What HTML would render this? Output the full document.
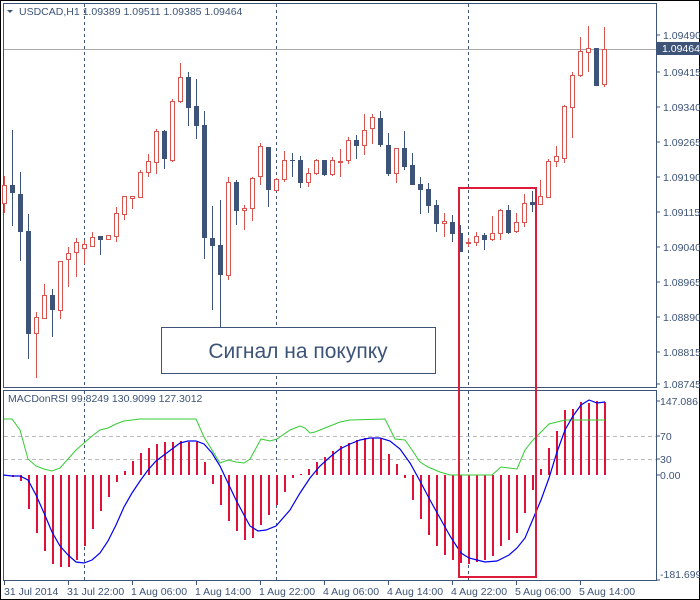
<!DOCTYPE html>
<html><head><meta charset="utf-8"><style>
html,body{margin:0;padding:0;background:#fff;}
body{width:700px;height:600px;overflow:hidden;position:relative;font-family:"Liberation Sans",sans-serif;}
svg{position:absolute;left:0;top:0;}
svg text{font-family:"Liberation Sans",sans-serif;fill:#3d5478;}
</style></head><body>
<svg id="s" width="700" height="600" viewBox="0 0 700 600" xmlns="http://www.w3.org/2000/svg">
<rect x="0.5" y="0.5" width="699" height="599" fill="#fff" stroke="#000"/>
<!-- main frame -->
<rect x="3.5" y="3.5" width="653" height="384" fill="none" stroke="#3d5478"/>
<rect x="3.5" y="390.5" width="653" height="190" fill="none" stroke="#3d5478"/>
<!-- vertical dashed -->
<g stroke="#3d5478" stroke-dasharray="3,3" stroke-width="1">
<line x1="84.5" y1="4" x2="84.5" y2="387"/><line x1="276.5" y1="4" x2="276.5" y2="387"/><line x1="468.5" y1="4" x2="468.5" y2="387"/>
<line x1="84.5" y1="391" x2="84.5" y2="580"/><line x1="276.5" y1="391" x2="276.5" y2="580"/><line x1="468.5" y1="391" x2="468.5" y2="580"/>
</g>
<!-- price line -->
<line x1="4" y1="49.5" x2="656" y2="49.5" stroke="#aaa"/>
<g id="candles"></g>
<!-- header -->
<path d="M7 10 L13 10 L10 13 Z" fill="#3d5478"/>
<text x="19" y="15" font-size="10.5">USDCAD,H1  1.09389 1.09511 1.09385 1.09464</text>
<!-- annotation -->
<rect x="161.5" y="327.5" width="274" height="46" fill="#fff" stroke="#3d5478"/>
<text x="298" y="358" font-size="21" text-anchor="middle">Сигнал на покупку</text>
<!-- right axis -->
<g font-size="10.5">
<g stroke="#3d5478"><line x1="656" y1="35" x2="660" y2="35"/><line x1="656" y1="72" x2="660" y2="72"/><line x1="656" y1="107" x2="660" y2="107"/><line x1="656" y1="142" x2="660" y2="142"/><line x1="656" y1="177" x2="660" y2="177"/><line x1="656" y1="212" x2="660" y2="212"/><line x1="656" y1="247" x2="660" y2="247"/><line x1="656" y1="282" x2="660" y2="282"/><line x1="656" y1="317" x2="660" y2="317"/><line x1="656" y1="352" x2="660" y2="352"/><line x1="656" y1="384" x2="660" y2="384"/>
<line x1="656" y1="401" x2="660" y2="401"/><line x1="656" y1="436" x2="660" y2="436"/><line x1="656" y1="459" x2="660" y2="459"/><line x1="656" y1="475" x2="660" y2="475"/><line x1="656" y1="580" x2="660" y2="580"/></g>
<text x="663" y="39">1.09490</text>
<rect x="657" y="42" width="43" height="13" fill="#3d5478"/>
<text x="662" y="52" style="fill:#fff">1.09464</text>
<text x="663" y="76">1.09415</text>
<text x="663" y="111">1.09340</text>
<text x="663" y="146">1.09265</text>
<text x="663" y="181">1.09190</text>
<text x="663" y="216">1.09115</text>
<text x="663" y="251">1.09040</text>
<text x="663" y="286">1.08965</text>
<text x="663" y="321">1.08890</text>
<text x="663" y="356">1.08815</text>
<text x="663" y="388">1.08745</text>
<text x="660" y="405">147.086</text>
<text x="660" y="440">70</text>
<text x="660" y="463">30</text>
<text x="660" y="479">0.00</text>
<text x="660" y="578">-181.6993</text>
</g>
<!-- indicator -->
<text x="8" y="402" font-size="10.5">MACDonRSI 99.8249 130.9099 127.3012</text>
<g stroke="#bbb" stroke-dasharray="4,3"><line x1="4" y1="436.5" x2="656" y2="436.5"/><line x1="4" y1="459.5" x2="656" y2="459.5"/></g>
<g id="bars" stroke="#e0103a" stroke-width="2"></g>
<polyline fill="none" stroke="#33cc33" stroke-width="1" points="4,419 12,419 20,430 28,459 36,466 44,469 52,471 60,468 68,459 76,450 84,443 92,436 100,430 108,428 116,424 124,421 132,420 140,419 196,419 204,437 212,450 220,463 228,460 236,462 244,463 250,459 261,439 270,441 277,439 290,430 300,426 305,428 310,433 315,432 330,426 340,422 350,420 385,419 389,427 395,439 405,440 412,450 420,462 428,467 440,472 450,475 492,475 501,467 509,468 517,469 525,450 533,440 541,432 549,424 557,422 565,420 605,420"/>
<polyline fill="none" stroke="#0000ee" stroke-width="1.2" points="3,475 12,476 20,476 28,480 36,495 44,513 52,532 60,546 68,555 76,562 84,563 92,560 100,553 108,541 116,525 124,507 132,493 140,481 148,470 156,461 164,455 172,449 180,443 188,441 196,441 204,444 212,453 220,466 228,483 236,500 244,515 250,526 258,531 266,530 276,526 290,510 300,493 310,478 320,466 330,457 340,449 350,444 360,440 370,438 380,438 390,441 400,449 410,463 420,481 430,500 440,518 450,536 461,553 469,558 477,560 485,562 497,561 509,555 517,548 525,538 533,519 541,500 549,478 557,452 565,430 573,416 581,405 589,400 597,403 605,402"/>
<!-- red rect -->
<rect x="459" y="188" width="77" height="389" fill="none" stroke="#dd1c3c" stroke-width="2"/>
<!-- bottom axis -->
<g stroke="#3d5478"><line x1="4.5" y1="581" x2="4.5" y2="585"/><line x1="68.5" y1="581" x2="68.5" y2="585"/><line x1="132.5" y1="581" x2="132.5" y2="585"/><line x1="196.5" y1="581" x2="196.5" y2="585"/><line x1="260.5" y1="581" x2="260.5" y2="585"/><line x1="324.5" y1="581" x2="324.5" y2="585"/><line x1="388.5" y1="581" x2="388.5" y2="585"/><line x1="452.5" y1="581" x2="452.5" y2="585"/><line x1="516.5" y1="581" x2="516.5" y2="585"/><line x1="580.5" y1="581" x2="580.5" y2="585"/></g>
<g font-size="10.5">
<text x="4" y="595">31 Jul 2014</text>
<text x="67" y="595">31 Jul 22:00</text>
<text x="131" y="595">1 Aug 06:00</text>
<text x="195" y="595">1 Aug 14:00</text>
<text x="259" y="595">1 Aug 22:00</text>
<text x="323" y="595">4 Aug 06:00</text>
<text x="387" y="595">4 Aug 14:00</text>
<text x="451" y="595">4 Aug 22:00</text>
<text x="515" y="595">5 Aug 06:00</text>
<text x="579" y="595">5 Aug 14:00</text>
</g>
</svg>
<script>
var C=[[185,203,176,213,1],[185,193,130,226,0],[194,232,172,261,0],[231,334,214,359,0],[317,333,312,378,1],[295,318,284,318,1],[295,310,289,337,0],[261,310,261,319,1],[253,259,247,287,1],[242,252,238,277,1],[244,248,240,264,1],[237,246,232,246,1],[236,240,236,255,0],[235,239,235,239,1],[213,236,207,242,1],[196,214,196,220,1],[196,198,196,209,1],[172,197,170,198,1],[161,172,154,177,1],[131,162,129,174,1],[131,159,130,169,0],[101,160,99,162,1],[77,101,63,103,1],[77,108,72,126,0],[106,126,79,139,0],[125,238,111,259,0],[238,246,206,310,0],[245,275,200,327,0],[182,275,177,280,1],[182,211,180,225,0],[208,210,205,230,1],[178,208,177,221,1],[146,176,143,185,1],[147,190,147,207,0],[179,190,178,191,1],[160,179,151,182,1],[160,161,153,177,0],[160,183,156,188,0],[173,182,168,187,1],[160,173,159,175,1],[160,175,160,176,0],[160,174,157,176,1],[161,162,149,177,1],[140,160,137,164,1],[140,146,135,159,0],[130,145,114,155,1],[117,128,114,144,1],[118,145,111,147,0],[145,174,133,176,0],[148,173,148,183,1],[148,167,131,170,0],[165,185,153,185,0],[184,190,177,214,0],[189,206,183,213,0],[205,224,200,232,0],[221,223,213,237,1],[222,234,215,242,0],[233,252,225,252,0],[242,243,238,247,1],[236,242,232,246,1],[235,240,233,250,0],[233,239,216,241,1],[210,233,209,240,1],[210,233,205,234,0],[222,231,213,233,1],[203,222,194,227,1],[202,205,191,212,0],[196,204,180,204,1],[161,197,159,198,1],[156,161,146,167,1],[106,158,105,163,1],[75,107,72,138,1],[51,75,37,77,1],[48,52,26,72,1],[48,86,48,86,0],[49,84,27,87,1]];
var ns="http://www.w3.org/2000/svg",g=document.getElementById('candles');
function el(t,a,p){var e=document.createElementNS(ns,t);for(var k in a)e.setAttribute(k,a[k]);p.appendChild(e);}
C.forEach(function(c,i){var x=4+8*i+0.5;var col=c[4]?'#d9534f':'#3d5478';
el('line',{x1:x,y1:c[2],x2:x,y2:c[3],stroke:col},g);
if(c[4]){el('rect',{x:x-2,y:c[0]+0.5,width:4,height:Math.max(1,c[1]-c[0]),fill:'#fff',stroke:col},g);}
else{el('rect',{x:x-2.5,y:c[0],width:5,height:Math.max(1,c[1]-c[0]),fill:col},g);}});
var B=[475,477,481,509,533,551,564,567,567,560,546,529,511,497,482,471,461,453,448,444,442,442,441,442,442,462,484,505,521,531,540,538,525,515,505,492,478,474,469,462,457,451,446,443,440,438,438,438,454,464,478,500,519,535,546,555,560,563,564,562,560,556,546,540,533,513,490,469,448,431,410,409,402,403,401,402];
var gb=document.getElementById('bars');
B.forEach(function(v,i){if(v==475)return;var x=4+8*i+1;el('line',{x1:x,y1:475,x2:x,y2:v},gb);});
</script>
</body></html>
